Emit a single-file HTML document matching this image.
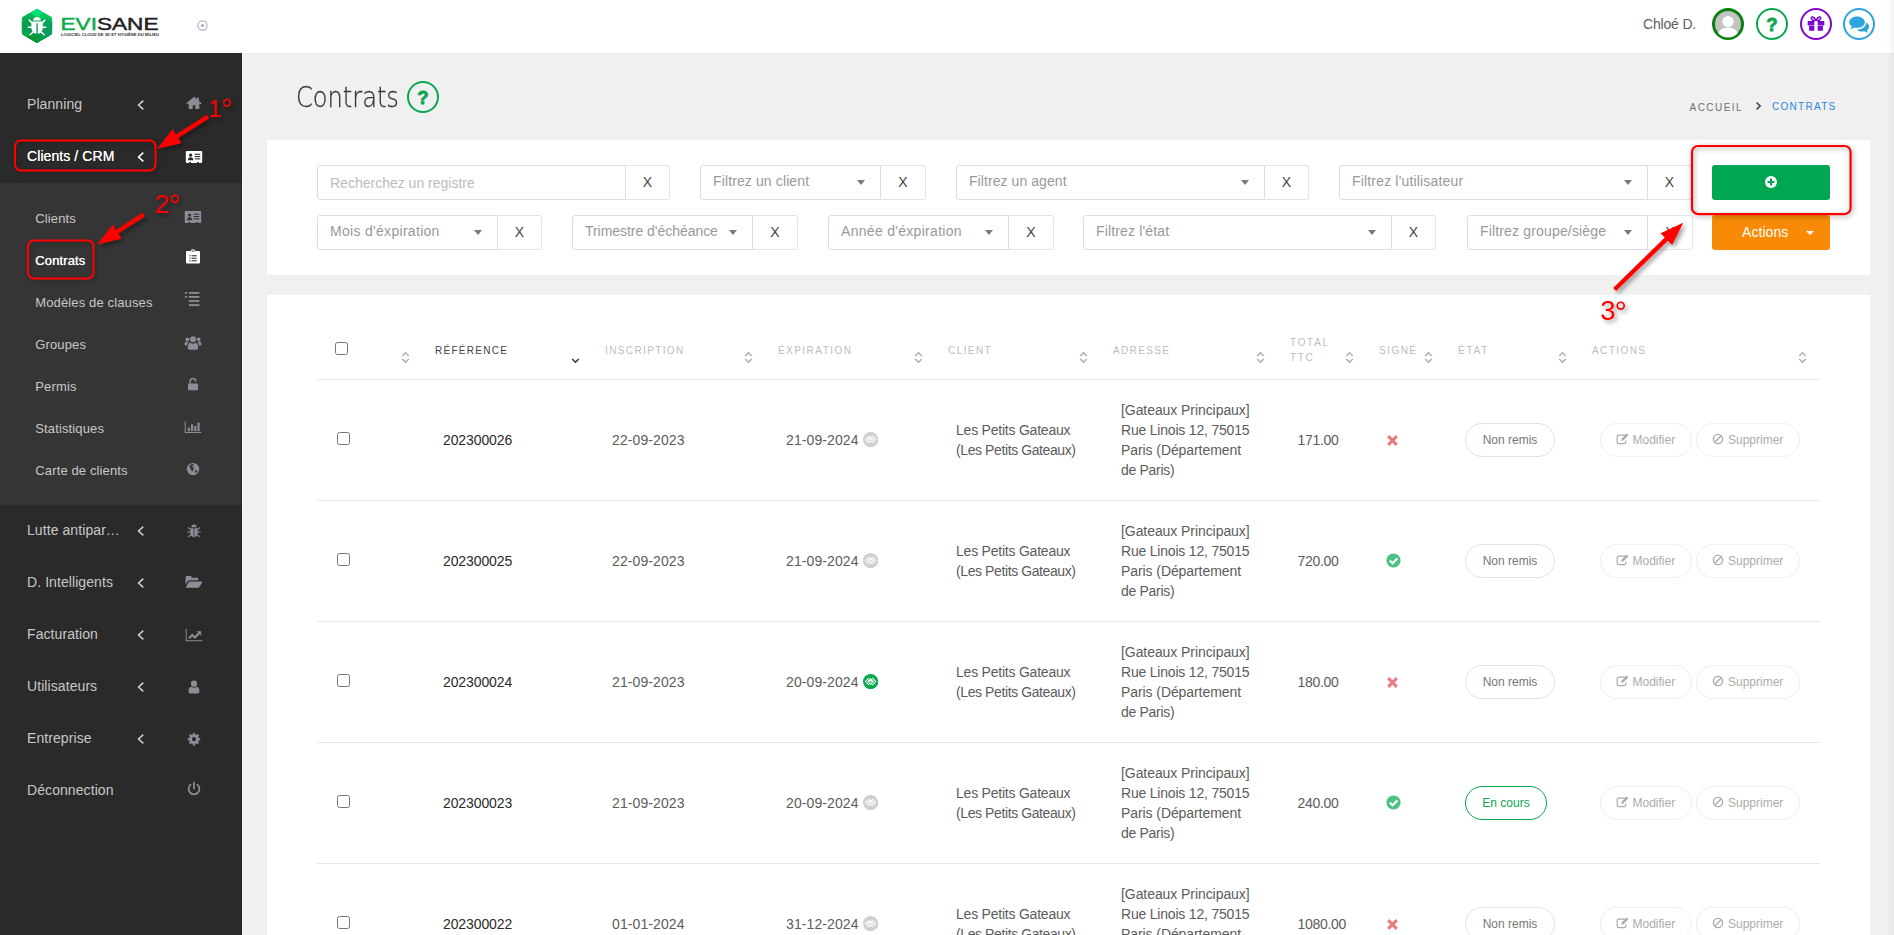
<!DOCTYPE html>
<html lang="fr">
<head>
<meta charset="utf-8">
<title>Contrats</title>
<style>
*{box-sizing:border-box;margin:0;padding:0}
html,body{width:1894px;height:935px;overflow:hidden;background:#f0f0f0;font-family:"Liberation Sans",sans-serif;}
body{position:relative}
.abs{position:absolute}
#topbar{position:absolute;left:0;top:0;width:1894px;height:54px;background:#fff;border-bottom:1px solid #ebebeb}
#sidebar{position:absolute;left:0;top:53px;width:243px;height:882px;background:#2a2a2a;border-right:1px solid #f9f9f9;box-shadow:inset -1px 0 0 #232323}
#submenu{position:absolute;left:0;top:130px;width:241px;height:322px;background:#353535}
.mi{position:absolute;left:27px;letter-spacing:.08px;font-size:14px;color:#c8c8c8;line-height:16px;white-space:nowrap}
.mi.on{color:#fff;text-shadow:0 0 .6px #fff}
.si{position:absolute;left:35.300px;transform:translateY(.5px);letter-spacing:.13px;font-size:13px;color:#c8c8c8;line-height:16px;white-space:nowrap}
.si.on{color:#fff;text-shadow:0 0 .7px #fff}
.chev{position:absolute;left:136px;width:10px;height:10px}
.ico{position:absolute;left:184px;width:18px;height:16px}
#scroll{position:absolute;left:1886px;top:0;width:8px;height:935px;background:linear-gradient(90deg,rgba(0,0,0,0),rgba(0,0,0,.045))}
h1{position:absolute;left:296.300px;top:78px;font-size:28px;color:#333;line-height:40px;font-family:"DejaVu Sans","Liberation Sans",sans-serif;font-weight:200;transform:scaleX(.86);transform-origin:0 50%;white-space:nowrap;-webkit-text-stroke:.3px #3a3a3a}
.bc{position:absolute;font-size:10px;line-height:14px;white-space:nowrap}
.panel{position:absolute;left:267px;width:1603px;background:#fff}
.fld{position:absolute;height:35px;border:1px solid #ddd;border-radius:3px 0 0 3px;background:#fff;font-size:14px;color:#999;line-height:31px;padding-left:12px;white-space:nowrap}
.xb{position:absolute;height:35px;border:1px solid #e4e4e4;border-left:0;border-radius:0 3px 3px 0;background:#fff;font-size:14px;color:#444;line-height:33px;text-align:center}
.car{position:absolute;right:15px;top:14px;width:0;height:0;border-left:4px solid transparent;border-right:4px solid transparent;border-top:5px solid #7a7a7a}
.fld.ph{color:#bcbcbc;line-height:35px}
.btn{position:absolute;width:118px;height:35px;border-radius:3px}

#tablep div,#tablep span{white-space:nowrap}
.th{position:absolute;font-size:10px;line-height:15px;color:#bdbdbd;text-transform:none}
.th.dk{color:#444}
.hl{position:absolute;left:50px;width:1503px;height:1px;background:#e7e7e7}
.srt{position:absolute;width:9px;height:13px}
.cb{position:absolute;width:13px;height:13px;border:1px solid #767676;border-radius:2.500px;background:#fff}
.td{position:absolute;font-size:14px;line-height:20px;color:#5c5c5c}
.td.ref{color:#2b2b2b}
.pill{position:absolute;height:34px;border:1px solid #e2e2e2;border-radius:17px;font-size:12px;line-height:32px;color:#777;text-align:center}
.pill.g{border:1.500px solid #0aa551;color:#0aa551;line-height:33px}
.ab{position:absolute;height:34px;border:1px solid #efefef;border-radius:17px;font-size:12px;line-height:32px;color:#ababab}
.ab svg{position:absolute}
.ab span{position:absolute;top:0}
</style>
</head>
<body>
<div id="topbar">
<svg class="abs" style="left:18px;top:5px" width="150" height="44" viewBox="18 5 150 44">
<defs><linearGradient id="lg" x1="0" y1="0" x2="1" y2="1"><stop offset="0" stop-color="#00c060"/><stop offset="0.5" stop-color="#0aa548"/><stop offset="1" stop-color="#078a3a"/></linearGradient></defs>
<clipPath id="hx"><path d="M37 8.800 L50.800 16.800 Q52.100 17.600 52.100 19 L52.100 32.800 Q52.100 34.200 50.800 35 L38.300 42.300 Q37 43 35.700 42.300 L23.200 35 Q21.900 34.200 21.900 32.800 L21.900 19 Q21.900 17.600 23.200 16.800 Z"/></clipPath>
<g clip-path="url(#hx)"><rect x="20" y="7" width="34" height="38" fill="#0aa84f"/>
<path d="M37 8 L45 12.600 L37 17.400 L29 12.600 Z" fill="#00e07c"/>
<path d="M45 12.600 L53 17.300 L53 26.500 L37 17.400 Z" fill="#00cc55"/>
<path d="M29 12.600 L37 17.400 L21 26.500 L21 17.300 Z" fill="#05b352"/>
<path d="M21 22 L29 17.400 L37 22 L29 26.600 L21 31 Z" fill="#0aa04c"/>
<path d="M21 22.500 L33 29.500 L33 34 L21 31 Z" fill="#0c9a58"/>
<path d="M53 22 L45 17.400 L37 22 L45 26.600 L53 31 Z" fill="#0da060" opacity=".9"/>
<path d="M21 31 L29 35.500 L37 31 L37 44 L21 36 Z" fill="#04ad45"/>
<path d="M29 35.600 L37 31 L53 40 L37 44 Z" fill="#0a9a40"/>
<path d="M37 31 L53 22 L53 36 L45 40.500 Z" fill="#0b9d5c"/>
<path d="M29 35.600 L45 44.800 L37 46 L25 40 Z" fill="#03952a"/>
</g>
<g fill="#fff"><path d="M33.200 20.500 a3.800 3.600 0 0 1 7.600 0 z"/><path d="M31.400 21.400 h11.400 v6.700 a5.700 5.700 0 0 1 -11.400 0 z"/></g>
<rect x="36.400" y="23.300" width="1.400" height="10.800" fill="#12a456"/>
<g stroke="#fff" stroke-width="1.500" stroke-linecap="round" fill="none"><path d="M31.800 22.600 L29.300 20.100"/><path d="M42.400 22.600 L44.900 20.100"/><path d="M31.400 27.200 H28.300"/><path d="M42.800 27.200 H45.900"/><path d="M32.800 32.200 L30.100 34.700"/><path d="M41.400 32.200 L44.100 34.700"/></g>
<text x="60.5" y="29.800" font-family="Liberation Sans, sans-serif" font-size="16.400" textLength="98" lengthAdjust="spacingAndGlyphs"><tspan fill="#0eab4b" stroke="#0eab4b" stroke-width=".45">EVI</tspan><tspan fill="#222" stroke="#222" stroke-width=".45">SANE</tspan></text>
<text x="61" y="36.2" font-family="Liberation Sans, sans-serif" font-size="4" font-weight="bold" fill="#333" textLength="98" lengthAdjust="spacingAndGlyphs">LOGICIEL CLOUD DE 3D ET HYGIÈNE DU MILIEU</text>
</svg>
<svg class="abs" style="left:196px;top:19px" width="13" height="13" viewBox="0 0 13 13"><circle cx="6.5" cy="6.5" r="4.6" fill="none" stroke="#a9abbd" stroke-width="1.1"/><circle cx="6.5" cy="6.5" r="1.6" fill="#a9abbd"/></svg>
<div class="abs" style="left:1643px;top:15px;font-size:14px;letter-spacing:-.18px;color:#5e5e5e;line-height:18px;white-space:nowrap">Chloé D.</div>
<svg class="abs" style="left:1712px;top:8px" width="32" height="32" viewBox="0 0 32 32"><defs><clipPath id="cp"><circle cx="16" cy="16" r="13.5"/></clipPath></defs><circle cx="16" cy="16" r="14.5" fill="#c3c3c3" stroke="#0a8012" stroke-width="3"/><g clip-path="url(#cp)" fill="#fff"><circle cx="16" cy="13.5" r="5.6"/><path d="M5 32 C5 22.5 10 19.5 16 19.5 C22 19.5 27 22.5 27 32 Z"/></g></svg>
<svg class="abs" style="left:1756px;top:8px" width="32" height="32" viewBox="0 0 32 32"><circle cx="16" cy="16" r="15" fill="#fff" stroke="#0aa551" stroke-width="2"/><text x="16" y="22.5" text-anchor="middle" font-family="Liberation Sans, sans-serif" font-weight="bold" font-size="18.500" fill="#0aa551" stroke="#0aa551" stroke-width=".8">?</text></svg>
<svg class="abs" style="left:1800px;top:8px" width="32" height="32" viewBox="0 0 32 32"><circle cx="16" cy="16" r="15" fill="#fff" stroke="#7a06d0" stroke-width="2"/><g fill="#7a06d0"><path d="M7.700 13 h6.600 v4.600 H7.700z M17.700 13 H24.300 v4.600 h-6.600z M9.100 18 h5.200 v4.800 H9.100z M17.700 18 h5.200 v4.800 h-5.200z"/></g><g fill="none" stroke="#7a06d0" stroke-width="1.600"><path d="M15.400 12.600 C12.800 12.600 11 11.400 11.400 9.800 C11.800 8.400 14.600 8.600 15.800 12.400"/><path d="M16.600 12.600 C19.200 12.600 21 11.400 20.600 9.800 C20.200 8.400 17.400 8.600 16.200 12.400"/></g></svg>
<svg class="abs" style="left:1843px;top:8px" width="32" height="32" viewBox="0 0 32 32"><circle cx="16" cy="16" r="15" fill="#fff" stroke="#2da3df" stroke-width="2"/><g fill="#2da3df"><path d="M14 8.6 c4.4 0 7.8 2.5 7.8 5.6 s-3.4 5.6 -7.8 5.6 c-.9 0 -1.8 -.1 -2.6 -.3 c-1.2 .9 -2.7 1.5 -4.2 1.6 c.8 -.8 1.4 -1.7 1.6 -2.8 C7.200 17.300 6.2 15.800 6.2 14.200 c0 -3.100 3.400 -5.600 7.800 -5.600z"/><path d="M23.200 14.600 c1.700 .9 2.800 2.400 2.800 4.100 c0 1.400 -.8 2.700 -2.100 3.600 c.2 .9 .7 1.700 1.400 2.400 c-1.300 -.1 -2.600 -.6 -3.700 -1.400 c-.7 .2 -1.500 .3 -2.300 .3 c-2.200 0 -4.200 -.7 -5.500 -1.900 c.1 0 .2 0 .3 0 c5 0 9.100 -3.100 9.100 -7.100 z"/></g></svg>
</div>
<div id="sidebar"><div id="submenu"></div>
<div class="mi" style="top:43px">Planning</div>
<div class="mi on" style="top:95px">Clients / CRM</div>
<div class="si" style="top:157px">Clients</div>
<div class="si on" style="top:199px">Contrats</div>
<div class="si" style="top:241px">Modèles de clauses</div>
<div class="si" style="top:283px">Groupes</div>
<div class="si" style="top:325px">Permis</div>
<div class="si" style="top:367px">Statistiques</div>
<div class="si" style="top:409px">Carte de clients</div>
<div class="mi" style="top:469px">Lutte antipar…</div>
<div class="mi" style="top:521px">D. Intelligents</div>
<div class="mi" style="top:573px">Facturation</div>
<div class="mi" style="top:625px">Utilisateurs</div>
<div class="mi" style="top:677px">Entreprise</div>
<div class="mi" style="top:729px">Déconnection</div>
<svg class="chev" style="top:47px" viewBox="0 0 10 10"><path d="M7.3 0.6 L2.6 5 L7.3 9.4" fill="none" stroke="#ccc" stroke-width="1.6"/></svg>
<svg class="chev" style="top:99px" viewBox="0 0 10 10"><path d="M7.3 0.6 L2.6 5 L7.3 9.4" fill="none" stroke="#fff" stroke-width="1.6"/></svg>
<svg class="chev" style="top:473px" viewBox="0 0 10 10"><path d="M7.3 0.6 L2.6 5 L7.3 9.4" fill="none" stroke="#ccc" stroke-width="1.6"/></svg>
<svg class="chev" style="top:525px" viewBox="0 0 10 10"><path d="M7.3 0.6 L2.6 5 L7.3 9.4" fill="none" stroke="#ccc" stroke-width="1.6"/></svg>
<svg class="chev" style="top:577px" viewBox="0 0 10 10"><path d="M7.3 0.6 L2.6 5 L7.3 9.4" fill="none" stroke="#ccc" stroke-width="1.6"/></svg>
<svg class="chev" style="top:629px" viewBox="0 0 10 10"><path d="M7.3 0.6 L2.6 5 L7.3 9.4" fill="none" stroke="#ccc" stroke-width="1.6"/></svg>
<svg class="chev" style="top:681px" viewBox="0 0 10 10"><path d="M7.3 0.6 L2.6 5 L7.3 9.4" fill="none" stroke="#ccc" stroke-width="1.6"/></svg>
<svg class="ico" style="left:185px;top:42px" viewBox="0 0 18 16" ><g fill="#8d8d97"><path d="M9 1.800 L1.400 8.300 L2.400 9.400 L3.700 8.300 V14 H7.700 V10.200 H10.300 V14 H14.300 V8.300 L15.600 9.400 L16.600 8.300 L13.900 6 V2.600 H11.900 V4.300 Z"/></g></svg>
<svg class="ico" style="left:185px;top:96px" viewBox="0 0 18 16" ><rect x="0.8" y="2" width="16.400" height="12" rx="1" fill="#fff"/><g fill="#2b2b2b"><circle cx="5.600" cy="6.100" r="1.700"/><path d="M2.900 11.200 c0 -2.300 1.100 -3 2.700 -3 s2.700 .7 2.700 3z"/><rect x="9.700" y="4.700" width="5.600" height="1.100"/><rect x="9.700" y="7" width="5.600" height="1.100"/><rect x="9.700" y="9.300" width="5.600" height="1.100"/><rect x="4.200" y="13" width="1.800" height="1"/><rect x="12" y="13" width="1.800" height="1"/></g></svg>
<svg class="ico" style="top:156px" viewBox="0 0 18 16" ><rect x="0.8" y="2" width="16.400" height="12" rx="1" fill="#8d8d97"/><g fill="#353535"><circle cx="5.600" cy="6.100" r="1.700"/><path d="M2.900 11.200 c0 -2.300 1.100 -3 2.700 -3 s2.700 .7 2.700 3z"/><rect x="9.700" y="4.700" width="5.600" height="1.100"/><rect x="9.700" y="7" width="5.600" height="1.100"/><rect x="9.700" y="9.300" width="5.600" height="1.100"/><rect x="4.200" y="13" width="1.800" height="1"/><rect x="12" y="13" width="1.800" height="1"/></g></svg>
<svg class="ico" style="top:196px" viewBox="0 0 18 16" ><path d="M3 2.600 h3.600 a2.400 1.800 0 0 1 4.800 0 H15 a1 1 0 0 1 1 1 V14.500 a1 1 0 0 1 -1 1 H3 a1 1 0 0 1 -1 -1 V3.600 a1 1 0 0 1 1 -1z" fill="#fff" transform="translate(0 -.6) scale(1 .98)"/><g fill="#353535"><rect x="7.300" y="1.500" width="3.400" height="1.100" rx=".5"/><rect x="5.400" y="6.200" width="1.200" height="1.100"/><rect x="7.600" y="6.200" width="5" height="1.100"/><rect x="5.400" y="8.700" width="1.200" height="1.100"/><rect x="7.600" y="8.700" width="5" height="1.100"/><rect x="5.400" y="11.200" width="1.200" height="1.100"/><rect x="7.600" y="11.200" width="5" height="1.100"/></g></svg>
<svg class="ico" style="top:238px" viewBox="0 0 18 16" ><g fill="#8d8d97"><rect x="0.900" y="1" width="2" height="1.800"/><rect x="0.900" y="5" width="2" height="1.800"/><rect x="4.800" y="1" width="10.600" height="1.800"/><rect x="4.800" y="5" width="10.600" height="1.800"/><rect x="4.800" y="9.100" width="10.600" height="1.800"/><rect x="4.800" y="13.200" width="10.600" height="1.800"/></g></svg>
<svg class="ico" style="top:282px" viewBox="0 0 18 16" ><g fill="#8d8d97"><circle cx="3.400" cy="4.300" r="1.900"/><circle cx="14.600" cy="4.300" r="1.900"/><circle cx="9" cy="4.200" r="3"/><path d="M0.600 9.600 c0 -2.200 .8 -3 2.200 -3 c.6 0 1.200 .3 1.700 .7 c-1 .8 -1.400 1.800 -1.500 3.300 h-1.300 c-.7 0 -1.100 -.4 -1.100 -1z"/><path d="M17.400 9.600 c0 -2.200 -.8 -3 -2.200 -3 c-.6 0 -1.200 .3 -1.700 .7 c1 .8 1.400 1.800 1.500 3.300 h1.300 c.7 0 1.100 -.4 1.100 -1z"/><path d="M3.800 13 c0 -3.800 1.200 -5.200 2.800 -5.200 c.7 .6 1.500 .9 2.400 .9 s1.700 -.3 2.400 -.9 c1.600 0 2.800 1.400 2.800 5.200 c0 1.100 -.8 1.700 -1.800 1.700 h-6.800 c-1 0 -1.800 -.6 -1.800 -1.700z"/></g></svg>
<svg class="ico" style="top:323px" viewBox="0 0 18 16" ><rect x="4" y="7.400" width="10" height="6.800" rx=".8" fill="#8d8d97"/><path d="M6.200 7.600 V5.200 a2.800 2.800 0 0 1 5.600 0 V5.800" fill="none" stroke="#8d8d97" stroke-width="1.500"/></svg>
<svg class="ico" style="top:366px" viewBox="0 0 18 16" ><g fill="#8d8d97"><path d="M0.700 1.900 h1 v11.200 h15.600 v1 h-16.600z"/><rect x="3.800" y="8.600" width="2.200" height="3.600"/><rect x="7" y="5.400" width="2.200" height="6.800"/><rect x="10.200" y="7" width="2.200" height="5.200"/><rect x="13.400" y="3.600" width="2.200" height="8.600"/></g></svg>
<svg class="ico" style="top:408px" viewBox="0 0 18 16" ><circle cx="9" cy="8.100" r="6.200" fill="#8d8d97"/><path d="M5.600 4.200 c1.200 -1 2.800 -1.200 4 -.8 c.6 .6 -.2 1.400 -1 1.600 c-.6 .8 .2 1.400 1 1.800 c.8 .4 .6 1.400 -.2 1.800 c-.6 .4 -.4 1.400 -1 2 c-.6 .2 -.8 -.6 -.8 -1.400 c-.8 -.4 -1.400 -1 -1.200 -2 c-.6 -.6 -1.200 -1.600 -.8 -3z M11.400 9 c.8 -.2 1.800 .2 2 1 c-.4 1 -1 1.800 -1.800 2 c-.4 -.8 -.6 -2 -.2 -3z" fill="#353535"/></svg>
<svg class="ico" style="left:185px;top:470px" viewBox="0 0 18 16" ><g fill="#8d8d97"><path d="M6.300 4.300 a2.700 2.700 0 0 1 5.400 0z"/><path d="M5.300 5.200 h3.300 v9 c-2 -.2 -3.300 -1.700 -3.300 -3.900z M9.400 5.200 h3.300 v5.100 c0 2.200 -1.300 3.700 -3.300 3.900z"/></g><g stroke="#8d8d97" stroke-width="1.100" fill="none"><path d="M5.300 6.600 L3 4.300 M12.700 6.600 L15 4.300 M5.300 9 H2.300 M12.700 9 H15.700 M5.500 11.800 L3.200 14.200 M12.500 11.800 L14.800 14.200"/></g></svg>
<svg class="ico" style="left:185px;top:521px" viewBox="0 0 18 16" ><g fill="#8d8d97"><path d="M0.600 3.300 a1.200 1.200 0 0 1 1.200 -1.200 h3.600 a1.200 1.200 0 0 1 1.200 1.200 v.5 h5.600 a1.200 1.200 0 0 1 1.200 1.200 v1.300 h-8.800 c-.9 0 -1.500 .4 -2 1.100 l-2 3.300z"/><path d="M4.800 7.400 h11.800 c.7 0 .9 .4 .5 1 l-2.600 4.400 c-.4 .6 -1 1 -1.700 1 h-11.400 c-.5 0 -.6 -.3 -.4 -.7 l2.400 -4.600 c.3 -.7 .8 -1.100 1.400 -1.100z"/></g></svg>
<svg class="ico" style="left:185px;top:574px" viewBox="0 0 18 16" ><g fill="#8d8d97"><path d="M0.700 1.700 h1 v11.500 h15.600 v1 h-16.600z"/><path d="M3.300 10.600 l3.900 -4 l2.600 2.300 l3.200 -3.200 l-1.500 -1.500 h4.600 v4.600 l-1.500 -1.500 l-4.700 4.700 l-2.600 -2.400 l-2.500 2.500z"/></g></svg>
<svg class="ico" style="left:185px;top:626px" viewBox="0 0 18 16" ><g fill="#8d8d97"><circle cx="9" cy="4.700" r="3.100"/><path d="M3.500 12.500 c0 -3.300 1.300 -4.600 2.900 -4.700 c.7 .6 1.600 1 2.600 1 s1.900 -.4 2.600 -1 c1.600 .1 2.900 1.400 2.900 4.700 c0 1.200 -.8 1.900 -1.900 1.900 h-7.200 c-1.100 0 -1.900 -.7 -1.900 -1.900z"/></g></svg>
<svg class="ico" style="left:185px;top:678px" viewBox="0 0 18 16" ><path d="M7.93 1.99 L10.07 1.99 L10.30 3.68 L11.28 4.09 L12.64 3.06 L14.14 4.56 L13.11 5.92 L13.52 6.90 L15.21 7.13 L15.21 9.27 L13.52 9.50 L13.11 10.48 L14.14 11.84 L12.64 13.34 L11.28 12.31 L10.30 12.72 L10.07 14.41 L7.93 14.41 L7.70 12.72 L6.72 12.31 L5.36 13.34 L3.86 11.84 L4.89 10.48 L4.48 9.50 L2.79 9.27 L2.79 7.13 L4.48 6.90 L4.89 5.92 L3.86 4.56 L5.36 3.06 L6.72 4.09 L7.70 3.68Z M9 6.100 a2.100 2.100 0 1 0 0.001 0z" fill="#8d8d97" fill-rule="evenodd"/></svg>
<svg class="ico" style="left:185px;top:728px" viewBox="0 0 18 16" ><g fill="none" stroke="#8d8d97" stroke-width="1.700" stroke-linecap="round"><path d="M9 1.700 V7.600"/><path d="M5.600 3.700 a5.400 5.400 0 1 0 6.800 0"/></g></svg>
</div>
<div id="scroll"></div>
<h1>Contrats</h1>
<svg class="abs" style="left:407px;top:81px" width="32" height="32" viewBox="0 0 32 32"><circle cx="16" cy="16" r="15" fill="#f0f0f0" stroke="#0aa551" stroke-width="2"/><text x="16" y="22.500" text-anchor="middle" font-family="Liberation Sans, sans-serif" font-weight="bold" font-size="18.500" fill="#0aa551" stroke="#0aa551" stroke-width=".8">?</text></svg>
<div class="bc" style="left:1689.500px;top:101px;color:#707070;letter-spacing:1.47px">ACCUEIL</div>
<svg class="abs" style="left:1754px;top:101px" width="9" height="10" viewBox="0 0 9 10"><path d="M2.600 1.600 L6.200 5 L2.600 8.400" fill="none" stroke="#444" stroke-width="1.500"/></svg>
<div class="bc" style="left:1772px;top:100px;color:#2a86dc;letter-spacing:1.29px">CONTRATS</div>
<div class="panel" id="filters" style="top:140px;height:135px">
<div class="fld ph" style="left:50px;top:25px;width:309px">Recherchez un registre</div><div class="xb" style="left:359px;top:25px;width:44px">X</div>
<div class="fld" style="left:433px;top:25px;width:181px;letter-spacing:0.12px">Filtrez un client<i class="car"></i></div><div class="xb" style="left:614px;top:25px;width:45px">X</div>
<div class="fld" style="left:689px;top:25px;width:309px;letter-spacing:0.07px">Filtrez un agent<i class="car"></i></div><div class="xb" style="left:998px;top:25px;width:44px">X</div>
<div class="fld" style="left:1072px;top:25px;width:309px;letter-spacing:0.17px">Filtrez l'utilisateur<i class="car"></i></div><div class="xb" style="left:1381px;top:25px;width:44px">X</div>
<div class="fld" style="left:50px;top:75px;width:181px;letter-spacing:0.3px">Mois d'éxpiration<i class="car"></i></div><div class="xb" style="left:231px;top:75px;width:44px">X</div>
<div class="fld" style="left:305px;top:75px;width:181px;letter-spacing:-0.04px">Trimestre d'échéance<i class="car"></i></div><div class="xb" style="left:486px;top:75px;width:45px">X</div>
<div class="fld" style="left:561px;top:75px;width:181px;letter-spacing:0.3px">Année d'éxpiration<i class="car"></i></div><div class="xb" style="left:742px;top:75px;width:45px">X</div>
<div class="fld" style="left:816px;top:75px;width:309px;letter-spacing:0.15px">Filtrez l'état<i class="car"></i></div><div class="xb" style="left:1125px;top:75px;width:44px">X</div>
<div class="fld" style="left:1200px;top:75px;width:181px;letter-spacing:0.16px">Filtrez groupe/siège<i class="car"></i></div><div class="xb" style="left:1381px;top:75px;width:45px">X</div>
<div class="btn" style="left:1445px;top:25px;background:#00a651"><svg width="14" height="14" viewBox="0 0 14 14" style="position:absolute;left:52px;top:10px"><circle cx="7" cy="7" r="6" fill="#fff"/><path d="M7 3.600 V10.400 M3.600 7 H10.400" stroke="#00a651" stroke-width="2"/></svg></div>
<div class="btn" style="left:1445px;top:75px;background:#f88a05"><span style="position:absolute;left:30px;top:0;line-height:34px;font-size:14px;letter-spacing:.07px;color:#fff">Actions</span><i style="position:absolute;left:94px;top:16px;border-left:4px solid transparent;border-right:4px solid transparent;border-top:4px solid #fff"></i></div>
</div>
<div class="panel" id="tablep" style="top:295px;height:640px;overflow:hidden">
<div class="cb" style="left:68px;top:47px"></div>
<svg class="srt" style="left:134.0px;top:56px" viewBox="0 0 9 13"><path d="M1.200 5 L4.500 1.800 L7.800 5 M1.200 8 L4.500 11.200 L7.800 8" fill="none" stroke="#adadad" stroke-width="1.500"/></svg>
<div class="th dk" style="left:168px;top:48px;letter-spacing:1.29px">RÉFÉRENCE</div>
<svg class="srt" style="left:304.0px;top:56px" viewBox="0 0 9 13"><path d="M1.200 8 L4.500 11.200 L7.800 8" fill="none" stroke="#333" stroke-width="1.600"/></svg>
<div class="th " style="left:338px;top:48px;letter-spacing:1.38px">INSCRIPTION</div>
<svg class="srt" style="left:477.0px;top:56px" viewBox="0 0 9 13"><path d="M1.200 5 L4.500 1.800 L7.800 5 M1.200 8 L4.500 11.200 L7.800 8" fill="none" stroke="#adadad" stroke-width="1.500"/></svg>
<div class="th " style="left:511px;top:48px;letter-spacing:1.45px">ÉXPIRATION</div>
<svg class="srt" style="left:647.0px;top:56px" viewBox="0 0 9 13"><path d="M1.200 5 L4.500 1.800 L7.800 5 M1.200 8 L4.500 11.200 L7.800 8" fill="none" stroke="#adadad" stroke-width="1.500"/></svg>
<div class="th " style="left:681px;top:48px;letter-spacing:1.43px">CLIENT</div>
<svg class="srt" style="left:812.0px;top:56px" viewBox="0 0 9 13"><path d="M1.200 5 L4.500 1.800 L7.800 5 M1.200 8 L4.500 11.200 L7.800 8" fill="none" stroke="#adadad" stroke-width="1.500"/></svg>
<div class="th " style="left:846px;top:48px;letter-spacing:1.35px">ADRESSE</div>
<svg class="srt" style="left:989.0px;top:56px" viewBox="0 0 9 13"><path d="M1.200 5 L4.500 1.800 L7.800 5 M1.200 8 L4.500 11.200 L7.800 8" fill="none" stroke="#adadad" stroke-width="1.500"/></svg>
<div class="th " style="left:1112px;top:48px;letter-spacing:1.47px">SIGNÉ</div>
<svg class="srt" style="left:1157.0px;top:56px" viewBox="0 0 9 13"><path d="M1.200 5 L4.500 1.800 L7.800 5 M1.200 8 L4.500 11.200 L7.800 8" fill="none" stroke="#adadad" stroke-width="1.500"/></svg>
<div class="th " style="left:1191px;top:48px;letter-spacing:1.74px">ÉTAT</div>
<svg class="srt" style="left:1291.0px;top:56px" viewBox="0 0 9 13"><path d="M1.200 5 L4.500 1.800 L7.800 5 M1.200 8 L4.500 11.200 L7.800 8" fill="none" stroke="#adadad" stroke-width="1.500"/></svg>
<div class="th " style="left:1325px;top:48px;letter-spacing:1.42px">ACTIONS</div>
<svg class="srt" style="left:1531.0px;top:56px" viewBox="0 0 9 13"><path d="M1.200 5 L4.500 1.800 L7.800 5 M1.200 8 L4.500 11.200 L7.800 8" fill="none" stroke="#adadad" stroke-width="1.500"/></svg>
<div class="th" style="left:1023px;top:40px;letter-spacing:1.7px">TOTAL<br>TTC</div>
<svg class="srt" style="left:1078.0px;top:56px" viewBox="0 0 9 13"><path d="M1.200 5 L4.500 1.800 L7.800 5 M1.200 8 L4.500 11.200 L7.800 8" fill="none" stroke="#adadad" stroke-width="1.500"/></svg>
<div class="hl" style="top:84px"></div>
<div class="cb" style="left:70px;top:137px"></div>
<div class="td ref" style="left:176px;top:135px;letter-spacing:-.1px">202300026</div>
<div class="td" style="left:345px;top:135px;letter-spacing:.1px">22-09-2023</div>
<div class="td" style="left:519px;top:135px;letter-spacing:.1px">21-09-2024</div>
<svg class="abs" style="left:595.7px;top:136.9px" width="15.200" height="15.200" viewBox="0 0 15 15"><circle cx="7.500" cy="7.500" r="7.500" fill="#cfcfcf"/><path d="M5.900 3.900 L2.400 7.500 L5.900 11.100 M9.100 3.900 L12.600 7.500 L9.100 11.100 M7.500 4.700 L10 7.500 L7.500 10.300 L5 7.500Z M6.300 7.500 L7.500 6.300 L8.700 7.500" fill="none" stroke="#fff" stroke-width="1"/></svg>
<div class="td" style="left:689px;top:125px;letter-spacing:-.22px">Les Petits Gateaux<br><span style="letter-spacing:-.4px">(Les Petits Gateaux)</span></div>
<div class="td" style="left:854px;top:105px"><span style="letter-spacing:-.07px">[Gateaux Principaux]</span><br><span style="letter-spacing:-.2px">Rue Linois 12, 75015</span><br><span style="letter-spacing:-.08px">Paris (Département</span><br><span style="letter-spacing:-.3px">de Paris)</span></div>
<div class="td" style="left:1030.5px;top:135px;letter-spacing:-.3px">171.00</div>
<svg class="abs" style="left:1120.3px;top:139.5px" width="11" height="11" viewBox="0 0 11 11"><path d="M1.200 1.200 L9.800 9.800 M9.800 1.200 L1.200 9.800" fill="none" stroke="#ea7b7f" stroke-width="3.100"/></svg>
<div class="pill" style="left:1198px;top:128px;width:90px">Non remis</div>
<div class="ab" style="left:1333px;top:128px;width:92px"><svg style="left:15px;top:9.200px" width="14" height="12" viewBox="0 0 14 12"><path d="M9.600 2.200 H2.600 a1.400 1.400 0 0 0 -1.400 1.400 V9.200 a1.400 1.400 0 0 0 1.400 1.400 H8.400 a1.400 1.400 0 0 0 1.400 -1.400 V7.400" fill="none" stroke="#ababab" stroke-width="1.200"/><path d="M5.200 7.800 L5.600 5.800 L10.800 0.600 L12.400 2.200 L7.200 7.400 Z" fill="#ababab"/></svg><span style="left:31.500px">Modifier</span></div>
<div class="ab" style="left:1429px;top:128px;width:104px"><svg style="left:15.300px;top:9.400px" width="12" height="12" viewBox="0 0 12 12"><circle cx="6" cy="6" r="4.600" fill="none" stroke="#ababab" stroke-width="1.400"/><path d="M2.800 9.200 L9.200 2.800" stroke="#ababab" stroke-width="1.400"/></svg><span style="left:31px">Supprimer</span></div>
<div class="hl" style="top:205px"></div>
<div class="cb" style="left:70px;top:258px"></div>
<div class="td ref" style="left:176px;top:256px;letter-spacing:-.1px">202300025</div>
<div class="td" style="left:345px;top:256px;letter-spacing:.1px">22-09-2023</div>
<div class="td" style="left:519px;top:256px;letter-spacing:.1px">21-09-2024</div>
<svg class="abs" style="left:595.7px;top:257.9px" width="15.200" height="15.200" viewBox="0 0 15 15"><circle cx="7.500" cy="7.500" r="7.500" fill="#cfcfcf"/><path d="M5.900 3.900 L2.400 7.500 L5.900 11.100 M9.100 3.900 L12.600 7.500 L9.100 11.100 M7.500 4.700 L10 7.500 L7.500 10.300 L5 7.500Z M6.300 7.500 L7.500 6.300 L8.700 7.500" fill="none" stroke="#fff" stroke-width="1"/></svg>
<div class="td" style="left:689px;top:246px;letter-spacing:-.22px">Les Petits Gateaux<br><span style="letter-spacing:-.4px">(Les Petits Gateaux)</span></div>
<div class="td" style="left:854px;top:226px"><span style="letter-spacing:-.07px">[Gateaux Principaux]</span><br><span style="letter-spacing:-.2px">Rue Linois 12, 75015</span><br><span style="letter-spacing:-.08px">Paris (Département</span><br><span style="letter-spacing:-.3px">de Paris)</span></div>
<div class="td" style="left:1030.5px;top:256px;letter-spacing:-.3px">720.00</div>
<svg class="abs" style="left:1118.9px;top:257.6px" width="15" height="15" viewBox="0 0 15 15"><circle cx="7.500" cy="7.500" r="7.100" fill="#4bc282"/><path d="M3.800 7.500 L6.600 10.200 L11.400 5.400" fill="none" stroke="#fff" stroke-width="2.200"/></svg>
<div class="pill" style="left:1198px;top:249px;width:90px">Non remis</div>
<div class="ab" style="left:1333px;top:249px;width:92px"><svg style="left:15px;top:9.200px" width="14" height="12" viewBox="0 0 14 12"><path d="M9.600 2.200 H2.600 a1.400 1.400 0 0 0 -1.400 1.400 V9.200 a1.400 1.400 0 0 0 1.400 1.400 H8.400 a1.400 1.400 0 0 0 1.400 -1.400 V7.400" fill="none" stroke="#ababab" stroke-width="1.200"/><path d="M5.200 7.800 L5.600 5.800 L10.800 0.600 L12.400 2.200 L7.200 7.400 Z" fill="#ababab"/></svg><span style="left:31.500px">Modifier</span></div>
<div class="ab" style="left:1429px;top:249px;width:104px"><svg style="left:15.300px;top:9.400px" width="12" height="12" viewBox="0 0 12 12"><circle cx="6" cy="6" r="4.600" fill="none" stroke="#ababab" stroke-width="1.400"/><path d="M2.800 9.200 L9.200 2.800" stroke="#ababab" stroke-width="1.400"/></svg><span style="left:31px">Supprimer</span></div>
<div class="hl" style="top:326px"></div>
<div class="cb" style="left:70px;top:379px"></div>
<div class="td ref" style="left:176px;top:377px;letter-spacing:-.1px">202300024</div>
<div class="td" style="left:345px;top:377px;letter-spacing:.1px">21-09-2023</div>
<div class="td" style="left:519px;top:377px;letter-spacing:.1px">20-09-2024</div>
<svg class="abs" style="left:595.7px;top:378.9px" width="15.200" height="15.200" viewBox="0 0 15 15"><circle cx="7.500" cy="7.500" r="7.500" fill="#09a84a"/><path d="M5.900 3.900 L2.400 7.500 L5.900 11.100 M9.100 3.900 L12.600 7.500 L9.100 11.100 M7.500 4.700 L10 7.500 L7.500 10.300 L5 7.500Z M6.300 7.500 L7.500 6.300 L8.700 7.500" fill="none" stroke="#fff" stroke-width="1"/></svg>
<div class="td" style="left:689px;top:367px;letter-spacing:-.22px">Les Petits Gateaux<br><span style="letter-spacing:-.4px">(Les Petits Gateaux)</span></div>
<div class="td" style="left:854px;top:347px"><span style="letter-spacing:-.07px">[Gateaux Principaux]</span><br><span style="letter-spacing:-.2px">Rue Linois 12, 75015</span><br><span style="letter-spacing:-.08px">Paris (Département</span><br><span style="letter-spacing:-.3px">de Paris)</span></div>
<div class="td" style="left:1030.5px;top:377px;letter-spacing:-.3px">180.00</div>
<svg class="abs" style="left:1120.3px;top:381.5px" width="11" height="11" viewBox="0 0 11 11"><path d="M1.200 1.200 L9.800 9.800 M9.800 1.200 L1.200 9.800" fill="none" stroke="#ea7b7f" stroke-width="3.100"/></svg>
<div class="pill" style="left:1198px;top:370px;width:90px">Non remis</div>
<div class="ab" style="left:1333px;top:370px;width:92px"><svg style="left:15px;top:9.200px" width="14" height="12" viewBox="0 0 14 12"><path d="M9.600 2.200 H2.600 a1.400 1.400 0 0 0 -1.400 1.400 V9.200 a1.400 1.400 0 0 0 1.400 1.400 H8.400 a1.400 1.400 0 0 0 1.400 -1.400 V7.400" fill="none" stroke="#ababab" stroke-width="1.200"/><path d="M5.200 7.800 L5.600 5.800 L10.800 0.600 L12.400 2.200 L7.200 7.400 Z" fill="#ababab"/></svg><span style="left:31.500px">Modifier</span></div>
<div class="ab" style="left:1429px;top:370px;width:104px"><svg style="left:15.300px;top:9.400px" width="12" height="12" viewBox="0 0 12 12"><circle cx="6" cy="6" r="4.600" fill="none" stroke="#ababab" stroke-width="1.400"/><path d="M2.800 9.200 L9.200 2.800" stroke="#ababab" stroke-width="1.400"/></svg><span style="left:31px">Supprimer</span></div>
<div class="hl" style="top:447px"></div>
<div class="cb" style="left:70px;top:500px"></div>
<div class="td ref" style="left:176px;top:498px;letter-spacing:-.1px">202300023</div>
<div class="td" style="left:345px;top:498px;letter-spacing:.1px">21-09-2023</div>
<div class="td" style="left:519px;top:498px;letter-spacing:.1px">20-09-2024</div>
<svg class="abs" style="left:595.7px;top:499.9px" width="15.200" height="15.200" viewBox="0 0 15 15"><circle cx="7.500" cy="7.500" r="7.500" fill="#cfcfcf"/><path d="M5.900 3.900 L2.400 7.500 L5.900 11.100 M9.100 3.900 L12.600 7.500 L9.100 11.100 M7.500 4.700 L10 7.500 L7.500 10.300 L5 7.500Z M6.300 7.500 L7.500 6.300 L8.700 7.500" fill="none" stroke="#fff" stroke-width="1"/></svg>
<div class="td" style="left:689px;top:488px;letter-spacing:-.22px">Les Petits Gateaux<br><span style="letter-spacing:-.4px">(Les Petits Gateaux)</span></div>
<div class="td" style="left:854px;top:468px"><span style="letter-spacing:-.07px">[Gateaux Principaux]</span><br><span style="letter-spacing:-.2px">Rue Linois 12, 75015</span><br><span style="letter-spacing:-.08px">Paris (Département</span><br><span style="letter-spacing:-.3px">de Paris)</span></div>
<div class="td" style="left:1030.5px;top:498px;letter-spacing:-.3px">240.00</div>
<svg class="abs" style="left:1118.9px;top:499.6px" width="15" height="15" viewBox="0 0 15 15"><circle cx="7.500" cy="7.500" r="7.100" fill="#4bc282"/><path d="M3.800 7.500 L6.600 10.200 L11.400 5.400" fill="none" stroke="#fff" stroke-width="2.200"/></svg>
<div class="pill g" style="left:1198px;top:491px;width:82px">En cours</div>
<div class="ab" style="left:1333px;top:491px;width:92px"><svg style="left:15px;top:9.200px" width="14" height="12" viewBox="0 0 14 12"><path d="M9.600 2.200 H2.600 a1.400 1.400 0 0 0 -1.400 1.400 V9.200 a1.400 1.400 0 0 0 1.400 1.400 H8.400 a1.400 1.400 0 0 0 1.400 -1.400 V7.400" fill="none" stroke="#ababab" stroke-width="1.200"/><path d="M5.200 7.800 L5.600 5.800 L10.800 0.600 L12.400 2.200 L7.200 7.400 Z" fill="#ababab"/></svg><span style="left:31.500px">Modifier</span></div>
<div class="ab" style="left:1429px;top:491px;width:104px"><svg style="left:15.300px;top:9.400px" width="12" height="12" viewBox="0 0 12 12"><circle cx="6" cy="6" r="4.600" fill="none" stroke="#ababab" stroke-width="1.400"/><path d="M2.800 9.200 L9.200 2.800" stroke="#ababab" stroke-width="1.400"/></svg><span style="left:31px">Supprimer</span></div>
<div class="hl" style="top:568px"></div>
<div class="cb" style="left:70px;top:621px"></div>
<div class="td ref" style="left:176px;top:619px;letter-spacing:-.1px">202300022</div>
<div class="td" style="left:345px;top:619px;letter-spacing:.1px">01-01-2024</div>
<div class="td" style="left:519px;top:619px;letter-spacing:.1px">31-12-2024</div>
<svg class="abs" style="left:595.7px;top:620.9px" width="15.200" height="15.200" viewBox="0 0 15 15"><circle cx="7.500" cy="7.500" r="7.500" fill="#cfcfcf"/><path d="M5.900 3.900 L2.400 7.500 L5.900 11.100 M9.100 3.900 L12.600 7.500 L9.100 11.100 M7.500 4.700 L10 7.500 L7.500 10.300 L5 7.500Z M6.300 7.500 L7.500 6.300 L8.700 7.500" fill="none" stroke="#fff" stroke-width="1"/></svg>
<div class="td" style="left:689px;top:609px;letter-spacing:-.22px">Les Petits Gateaux<br><span style="letter-spacing:-.4px">(Les Petits Gateaux)</span></div>
<div class="td" style="left:854px;top:589px"><span style="letter-spacing:-.07px">[Gateaux Principaux]</span><br><span style="letter-spacing:-.2px">Rue Linois 12, 75015</span><br><span style="letter-spacing:-.08px">Paris (Département</span><br><span style="letter-spacing:-.3px">de Paris)</span></div>
<div class="td" style="left:1030.5px;top:619px;letter-spacing:-.3px">1080.00</div>
<svg class="abs" style="left:1120.3px;top:623.5px" width="11" height="11" viewBox="0 0 11 11"><path d="M1.200 1.200 L9.800 9.800 M9.800 1.200 L1.200 9.800" fill="none" stroke="#ea7b7f" stroke-width="3.100"/></svg>
<div class="pill" style="left:1198px;top:612px;width:90px">Non remis</div>
<div class="ab" style="left:1333px;top:612px;width:92px"><svg style="left:15px;top:9.200px" width="14" height="12" viewBox="0 0 14 12"><path d="M9.600 2.200 H2.600 a1.400 1.400 0 0 0 -1.400 1.400 V9.200 a1.400 1.400 0 0 0 1.400 1.400 H8.400 a1.400 1.400 0 0 0 1.400 -1.400 V7.400" fill="none" stroke="#ababab" stroke-width="1.200"/><path d="M5.200 7.800 L5.600 5.800 L10.800 0.600 L12.400 2.200 L7.200 7.400 Z" fill="#ababab"/></svg><span style="left:31.500px">Modifier</span></div>
<div class="ab" style="left:1429px;top:612px;width:104px"><svg style="left:15.300px;top:9.400px" width="12" height="12" viewBox="0 0 12 12"><circle cx="6" cy="6" r="4.600" fill="none" stroke="#ababab" stroke-width="1.400"/><path d="M2.800 9.200 L9.200 2.800" stroke="#ababab" stroke-width="1.400"/></svg><span style="left:31px">Supprimer</span></div>
</div>
<svg class="abs" style="left:0;top:0;pointer-events:none" width="1894" height="935" viewBox="0 0 1894 935">
<defs><filter id="sh" x="-20%" y="-20%" width="140%" height="140%"><feDropShadow dx="2.500" dy="2.500" stdDeviation="2.100" flood-color="#000" flood-opacity=".4"/></filter>
<filter id="sb" x="-20%" y="-20%" width="140%" height="140%"><feDropShadow dx="1.200" dy="1.500" stdDeviation="2.400" flood-color="#000" flood-opacity=".38"/></filter></defs>
<g filter="url(#sb)" fill="none" stroke="#ff0000">
<rect x="15" y="140.500" width="140.500" height="30" rx="6" stroke-width="2"/>
<rect x="28" y="240.500" width="65.500" height="38" rx="6" stroke-width="2"/>
<rect x="1692" y="146" width="158.600" height="68.100" rx="6" stroke-width="2.200"/>
</g>
<g filter="url(#sh)">
<path d="M206.7 114.8 L175.9 134.4 L172.6 129.3 L157.2 148.8 L181.5 143.2 L178.2 138.1 L209.1 118.6Z" fill="#ff0000"/><path d="M142.5 212.8 L115.9 229.9 L112.6 224.8 L97.3 244.4 L121.5 238.7 L118.3 233.6 L144.9 216.6Z" fill="#ff0000"/><path d="M1616.1 291.1 L1667.9 240.7 L1672.1 245.0 L1683.2 222.7 L1660.6 233.2 L1664.8 237.5 L1613.1 287.9Z" fill="#ff0000"/>
<g font-family="Liberation Sans, sans-serif" fill="#ff0000">
<text x="208.500" y="116.700" font-size="24.500">1<tspan font-size="29" dy="2.500" dx="-1">°</tspan></text>
<text x="155" y="213" font-size="26.500">2<tspan font-size="31" dy="2.800" dx="-1">°</tspan></text>
<text x="1600.300" y="320.200" font-size="27.500">3<tspan font-size="31" dy="2.800" dx="-1">°</tspan></text>
</g>
</g>
</svg>
</body>
</html>
